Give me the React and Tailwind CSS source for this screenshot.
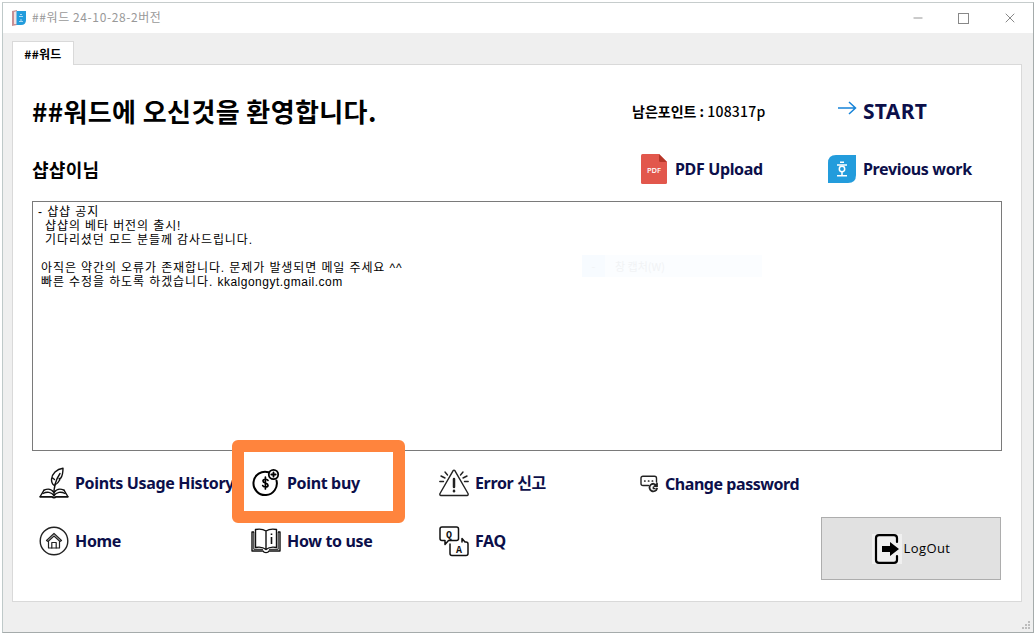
import { Minus, X } from 'lucide-react'

const FeatherIcon = () => (
  <svg width="30" height="32" viewBox="0 0 30 32" fill="none" stroke="#111" strokeWidth="1.4" strokeLinecap="round" strokeLinejoin="round">
    <path d="M15 29 C14.6 21 16.500 13 21 6.500" />
    <path d="M15.300 18.500 C11 15.500 12 9 16 5 C18.500 2.500 21.500 1.500 24 1.200 C24 5 23.500 8.500 21.800 11 L20 11.800 L21 12.500 C19.800 15 18 17 15.300 18.500 M13 10.500 L15.500 12.500" />
    <path d="M15 25.500 C12.500 22 8.500 21.500 5 23.200 M15 25.500 C17.500 22 21.500 21.500 25 23.200" />
    <path d="M5 23.200 L1.200 29.500 M25 23.200 L28.800 29.500" />
    <path d="M4 26.500 C8 24.200 12.500 25 15 28.500 C17.500 25 22 24.200 26 26.500" />
    <path d="M1.200 29.800 H12.800 Q15 31.500 17.200 29.800 H28.800" strokeWidth="1.800" />
  </svg>
)

const HomeIcon = () => (
  <svg width="30" height="30" viewBox="0 0 30 30" fill="none" stroke="#222" strokeWidth="1.4" strokeLinejoin="round" strokeLinecap="round">
    <circle cx="15" cy="15" r="13.800" />
    <path d="M7.500 14.500 L15 7.500 L22.500 14.500 L21 15.500 L15 10 L9 15.500 Z M9.500 15.500 V22 H12.800 V16.500 H17.200 V22 H20.500 V15.500" strokeWidth="1.2" />
    <path d="M12.800 22 H17.200" strokeWidth="1.2" />
  </svg>
)

const CoinIcon = () => (
  <svg width="30" height="30" viewBox="0 0 30 30" fill="none" stroke="#000" strokeWidth="2" strokeLinecap="round">
    <path d="M17.500 4.200 A11.700 11.700 0 1 0 25.500 12.500" />
    <circle cx="22.500" cy="6.500" r="4.700" strokeWidth="1.800" />
    <path d="M22.500 4.300 V8.700 M20.300 6.500 H24.700" strokeWidth="1.800" />
    <path d="M17 12.400 C16.400 11 12 10.600 12 13 C12 15.600 17 14.500 17 17.200 C17 19.700 12.200 19.400 11.700 17.500 M14.400 9.200 V21" strokeWidth="1.700" />
  </svg>
)

const BookIcon = () => (
  <svg width="30" height="26" viewBox="0 0 30 26" fill="none" stroke="#111" strokeWidth="1.4" strokeLinejoin="round">
    <path d="M15 3 C12 1 8 .8 4.500 1.500 V19.500 C8 18.800 12 19 15 21.500 C18 19 22 18.800 25.500 19.500 V1.500 C22 .8 18 1 15 3 Z V21.500" />
    <path d="M3 4 H1 V23 H12 C13 25.200 17 25.200 18 23 H29 V4 H27" />
    <path d="M2.800 4 V21.300 H12 M27.200 4 V21.300 H18" strokeWidth="1" />
    <path d="M20.500 5.500 V7 M20.500 9 V16" strokeWidth="1.600" />
  </svg>
)

const WarningIcon = () => (
  <svg width="30" height="28" viewBox="0 0 30 28" fill="none" stroke="#222" strokeWidth="1.400" strokeLinecap="round" strokeLinejoin="round">
    <path d="M14 1.800 Q15 .5 16 1.800 L29 24.500 Q29.600 26.300 28 26.500 H2 Q.4 26.300 1 24.500 Z" />
    <path d="M15 10 V18" strokeWidth="2.500" />
    <path d="M15 21.800 V22.300" strokeWidth="2.500" />
    <path d="M6 3 L8.500 6 M2 7 L6 9 M.8 12.500 H4.500 M24 3 L21.500 6 M28 7 L24 9 M29.200 12.500 H25.500" />
  </svg>
)

const FaqIcon = () => (
  <svg width="30" height="31" viewBox="0 0 30 31" fill="none" stroke="#111" strokeWidth="1.500" strokeLinejoin="round" strokeLinecap="round">
    <path d="M3 1 H17.500 Q19.500 1 19.500 3 V12.500 Q19.500 14.500 17.500 14.500 H9.500 L6 18.500 V14.500 H3 Q1 14.500 1 12.500 V3 Q1 1 3 1 Z" />
    <path d="M11 18 V27.500 Q11 29.500 13 29.500 H27 Q29 29.500 29 27.500 V18 Q29 16 27 16 H26 L23 12.500 V16" />
    <text x="7" y="11.500" fontFamily="Liberation Mono, monospace" fontSize="10" fontWeight="bold" fill="#111" stroke="none">Q</text>
    <text x="17" y="26.500" fontFamily="Liberation Mono, monospace" fontSize="10" fontWeight="bold" fill="#111" stroke="none">A</text>
  </svg>
)

const PasswordIcon = () => (
  <svg width="18" height="18" viewBox="0 0 18 18" fill="none" stroke="#222" strokeWidth="1.400" strokeLinecap="round">
    <path d="M8.500 10.500 H3 Q1 10.500 1 8.500 V3.200 Q1 1.200 3 1.200 H14.500 Q16.500 1.200 16.500 3.200 V7" />
    <path d="M4.700 6 H5 M8.500 6 H8.800 M12.300 6 H12.600" strokeWidth="1.700" />
    <path d="M16.500 10.500 A3.800 3.800 0 1 0 17 13.500 M17 8.500 V11 H14.500" strokeWidth="1.800" />
    <path d="M13.300 12 V13.500 H15" strokeWidth="1.300" />
  </svg>
)

const PdfIcon = () => (
  <svg width="26" height="30" viewBox="0 0 26 30">
    <path d="M1.500 0 H18 L26 8 V28.500 Q26 30 24.500 30 H1.500 Q0 30 0 28.500 V1.500 Q0 0 1.500 0 Z" fill="#e2574c" />
    <path d="M18 0 L26 8 H19.500 Q18 8 18 6.500 Z" fill="#b53629" />
    <text x="13" y="18.500" textAnchor="middle" fontFamily="Open Sans, sans-serif" fontSize="7.500" fontWeight="600" fill="#fff">PDF</text>
  </svg>
)

const HwpIcon = () => (
  <svg width="28" height="28" viewBox="0 0 28 28">
    <path d="M8 0 H28 V20 Q28 28 20 28 H0 V8 Q0 0 8 0 Z" fill="#239cdc" />
    <path d="M12 7.300 H16 M9 10 H19 M14 17 V20.500 M9 20.800 H19" stroke="#fff" strokeWidth="1.500" fill="none" />
    <circle cx="14" cy="14" r="2.700" stroke="#fff" strokeWidth="1.500" fill="none" />
  </svg>
)

const LogoutIcon = () => (
  <svg width="30" height="30" viewBox="0 0 30 30" fill="none" stroke="#000" strokeWidth="2.200" strokeLinecap="round">
    <path d="M25 8 V4 Q25 1.200 22 1.200 H7 Q4 1.200 4 4 V26 Q4 28.800 7 28.800 H22 Q25 28.800 25 26 V22" />
    <path d="M10 12 H18 V8 L27 15 L18 22 V18 H10 Z" fill="#000" stroke="none" />
  </svg>
)

const AppIcon = () => (
  <svg width="14" height="16" viewBox="0 0 14 16">
    <path d="M0 1 L5 0 V15 L0 16 Z" fill="#c98f94" />
    <path d="M2 2 L5 1 V14 L2 14 Z" fill="#f2dfe0" />
    <path d="M4.500 1 H14 V10 Q14 15 9 15 H4.500 Z" fill="#239cdc" />
    <path d="M8 4.500 H10 M7 6.500 H11 M9 9 V11 M7 11.500 H11" stroke="#cfeafa" strokeWidth=".8" />
  </svg>
)

const MenuItem = ({ icon, label, gap = 'w-9' }) => (
  <button className="flex h-full items-center whitespace-nowrap text-left">
    <span className={`flex shrink-0 items-center ${gap}`}>{icon}</span>
    <span className="font-['Noto_Sans','Noto_Sans_CJK_KR',sans-serif] text-base font-bold tracking-[-0.35px] text-[#0c0f4a]">{label}</span>
  </button>
)

const notice = [
  { text: '- 샵샵 공지', style: 'pl-0' },
  { text: '샵샵의 베타 버전의 출시!', style: 'pl-[7px]' },
  { text: '기다리셨던 모드 분들께 감사드립니다.', style: 'pl-[7px]' },
  { text: '', style: '' },
  { text: '아직은 약간의 오류가 존재합니다. 문제가 발생되면 메일 주세요 ^^', style: 'pl-[3px]' },
  { text: '빠른 수정을 하도록 하겠습니다. ', mail: 'kkalgongyt.gmail.com', style: 'pl-[3px]' },
]

export default function App() {
  return (
    <div className="h-[635px] w-[1036px] overflow-hidden bg-white pl-0.5 pt-0.5 font-['Noto_Sans_CJK_KR',sans-serif] text-black">
      <div className="relative flex h-[631px] w-[1032px] flex-col border border-[#a5abab] border-t-[#c6cccc] border-l-[#bfc9c9] bg-[#efefef]">
        {/* title bar */}
        <div className="flex h-[30px] shrink-0 items-center bg-white pl-[9px]">
          <AppIcon />
          <span className="ml-1.5 -mt-0.5 text-xs tracking-[0.6px] text-[#999]">##워드 24-10-28-2버전</span>
          <div className="ml-auto flex items-center pr-[15px] text-[#888]">
            <Minus size={14} strokeWidth={1.5} />
            <span className="mx-[33px] size-[11px] border border-[#888]" />
            <X size={16} strokeWidth={1.5} />
          </div>
        </div>

        {/* tab */}
        <div className="relative z-10 ml-[9px] mt-2 -mb-px flex h-6 w-[62px] shrink-0 items-center justify-center border border-b-0 border-[#d9d9d9] bg-white">
          <span className="text-xs font-semibold tracking-[0.3px]">##워드</span>
        </div>

        <div className="ml-[9px] h-[538px] w-[1010px] shrink-0 border border-[#d9d9d9] bg-white pl-[19px] pt-[17px]">
          <div className="flex h-[57px] items-center">
            <h1 className="w-[600px] text-[26px] font-bold tracking-[0.4px]">##워드에 오신것을 환영합니다.</h1>
            <span className="w-[206px] text-sm font-semibold">
              남은포인트 : <span className="font-medium tracking-[0.2px]">108317p</span>
            </span>
            <button className="mt-0.5 flex items-center">
              <svg width="25" height="20" viewBox="0 0 25 20" className="-mt-2" fill="none" stroke="#1683d8" strokeWidth="1.500">
                <path d="M0 10 H17 M11 4 L17.500 10 L11 16" />
              </svg>
              <span className="font-['Noto_Sans',sans-serif] text-[21px] font-bold tracking-[0.3px] text-[#0c0f4a]">START</span>
            </button>
          </div>
          <div className="flex h-[59px] items-center">
            <h2 className="w-[609px] text-lg font-bold tracking-[0.3px]">샵샵이님</h2>
            <div className="w-[187px]"><MenuItem icon={<PdfIcon />} label="PDF Upload" gap="w-[34px]" /></div>
            <MenuItem icon={<HwpIcon />} label="Previous work" gap="w-[35px]" />
          </div>

          <div className="mt-[3px] flex h-[250px] w-[970px] border border-[#7a7a7a] pl-[5px] pt-[3px]">
            <div className="w-[544px] font-['Liberation_Sans','Noto_Sans_CJK_KR',sans-serif] text-xs leading-[14px] tracking-[0.9px]">
              {notice.map((line, i) => (
                <p key={i} className={`h-3.5 whitespace-nowrap ${line.style}`}>
                  {line.text}
                  {line.mail && <span className="tracking-[0.5px]">{line.mail}</span>}
                </p>
              ))}
            </div>
            <div className="mt-[50px] flex h-[22px] w-[180px] items-center bg-[#fbfdff] text-[11px] text-[#f1f3f5]">
              <span className="mr-2.5 flex h-full w-[23px] items-center justify-center bg-[#f7fbff]">-</span>
              창 캡처(W)
            </div>
          </div>

          <div className="grid w-[970px] grid-cols-[212px_188px_201px_361px] grid-rows-[58px_58px] pl-[7px] pt-[3px]">
            <MenuItem icon={<FeatherIcon />} label="Points Usage History" />
            <MenuItem icon={<CoinIcon />} label="Point buy" />
            <MenuItem icon={<WarningIcon />} label="Error 신고" />
            <button className="flex h-full items-center pt-px">
              <span className="w-[25px]"><PasswordIcon /></span>
              <span className="whitespace-nowrap font-['Noto_Sans',sans-serif] text-base font-bold tracking-[-0.45px] text-[#0c0f4a]">Change password</span>
            </button>
            <MenuItem icon={<HomeIcon />} label="Home" />
            <MenuItem icon={<BookIcon />} label="How to use" />
            <MenuItem icon={<FaqIcon />} label="FAQ" />
            <button className="mt-[5px] flex h-[63px] w-[180px] items-center justify-center justify-self-end border border-[#adadad] bg-[#e1e1e1]">
              <span className="bg-[#f0f0f0]"><LogoutIcon /></span>
              <span className="ml-0.5 font-['Open_Sans',sans-serif] text-[13px] tracking-[0.4px]">LogOut</span>
            </button>
          </div>
        </div>

        {/* highlighted item */}
        <div className="pointer-events-none absolute left-[229px] top-[437px] h-[83px] w-[173px] rounded-md border-[12px] border-[#ff843d]" />

        <svg className="absolute bottom-0.5 right-0.5" width="9" height="9" viewBox="0 0 9 9" fill="#bdbdbd">
          <path d="M6 0h2v2h-2z M3 3h2v2h-2z M6 3h2v2h-2z M0 6h2v2h-2z M3 6h2v2h-2z M6 6h2v2h-2z" />
        </svg>
      </div>
    </div>
  )
}
